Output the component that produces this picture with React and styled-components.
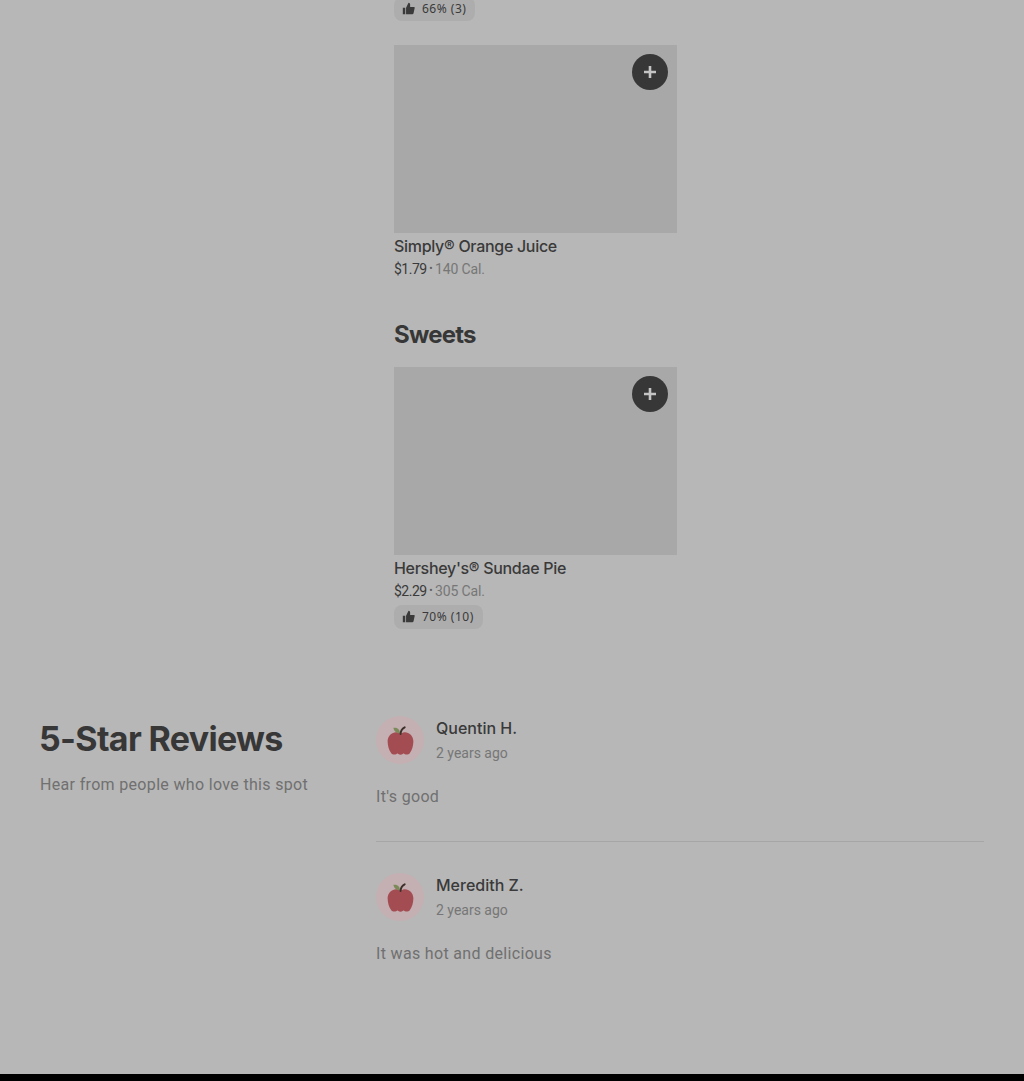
import React from 'react';
import styled, {createGlobalStyle} from 'styled-components';

const GlobalStyle = createGlobalStyle`
	html,
	body {
		margin: 0;
		padding: 0;
		background: #000;
	}
	body {
		font-family: Inter, 'Liberation Sans', sans-serif;
		color: #373737;
	}
`;

const Page = styled.div`
	height: 1074px;
	overflow: hidden;
	background: #b7b7b7;
`;

const Menu = styled.section`
	margin-top: -3px;
	padding-left: 394px;
	width: 283px;
`;

const Chip = styled.div`
	display: inline-flex;
	align-items: center;
	gap: 7px;
	box-sizing: border-box;
	height: 24px;
	margin-top: ${(p) => p.$top || 0}px;
	padding: 0 9px 2px 8px;
	border-radius: 8px;
	background: #adadad;
	font-family: 'Noto Sans', sans-serif;
	font-size: 12px;
	letter-spacing: 0.5px;
	color: #3a3a3a;
	svg {
		width: 13px;
		height: 13px;
	}
`;

const Card = styled.article`
	display: flex;
	flex-direction: column;
	align-items: flex-start;
	margin-top: ${(p) => p.$top || 0}px;
`;

const Photo = styled.div`
	position: relative;
	width: 283px;
	height: 188px;
	background: #a8a8a8;
`;

const AddButton = styled.button`
	position: absolute;
	top: 9px;
	right: 9px;
	display: flex;
	align-items: center;
	justify-content: center;
	width: 36px;
	height: 36px;
	padding: 0;
	border: 0;
	border-radius: 50%;
	background: #373737;
	color: #c4c4c4;
	svg {
		width: 14px;
		height: 14px;
	}
`;

const ItemName = styled.div`
	margin-top: 3px;
	font-size: 16px;
	font-weight: 500;
	line-height: 20px;
	letter-spacing: -0.3px;
	color: #3a3a3a;
`;

const ItemMeta = styled.div`
	display: flex;
	align-items: center;
	gap: 2.5px;
	margin-top: 3px;
	font-family: Roboto, sans-serif;
	font-size: 14px;
	line-height: 20px;
	color: #3a3a3a;
`;

const Price = styled.span`
	letter-spacing: -0.5px;
`;

const Dot = styled.span`
	font-size: 10px;
	color: #5e5e5e;
`;

const Calories = styled.span`
	letter-spacing: -0.15px;
	color: #767676;
`;

const SectionTitle = styled.h2`
	margin: 40px 0 16px;
	font-size: 24px;
	font-weight: 700;
	line-height: 32px;
	letter-spacing: -0.8px;
	color: #373737;
`;

const Reviews = styled.section`
	display: grid;
	grid-template-columns: 336px 608px;
	margin-top: 87px;
	padding-left: 40px;
`;

const ReviewsTitle = styled.h2`
	margin: 0 0 0 -1px;
	font-size: 34px;
	font-weight: 700;
	line-height: 46px;
	letter-spacing: -0.67px;
	color: #373737;
`;

const ReviewsIntro = styled.p`
	margin: 13px 0 0;
	font-family: Roboto, sans-serif;
	font-size: 16px;
	line-height: 20px;
	letter-spacing: 0.33px;
	color: #707070;
`;

const Review = styled.article`
	padding-bottom: 34px;
	& + & {
		padding-top: 31px;
		border-top: 1px solid #a6a6a6;
	}
`;

const Author = styled.div`
	display: flex;
	align-items: center;
	gap: 12px;
`;

const Avatar = styled.div`
	display: flex;
	align-items: center;
	justify-content: center;
	width: 48px;
	height: 48px;
	border-radius: 50%;
	background: #c4b0b3;
	svg {
		width: 33px;
		height: 33px;
	}
`;

const AuthorName = styled.div`
	font-size: 16px;
	font-weight: 500;
	line-height: 20px;
	color: #3a3a3a;
`;

const ReviewDate = styled.div`
	margin-top: 5px;
	font-family: Roboto, sans-serif;
	font-size: 14px;
	line-height: 20px;
	color: #767676;
`;

const ReviewText = styled.p`
	margin: 23px 0 0;
	font-family: Roboto, sans-serif;
	font-size: 16px;
	line-height: 20px;
	letter-spacing: 0.33px;
	color: #707070;
`;

const ThumbIcon = () => (
	<svg viewBox="0 0 16 16" fill="currentColor">
		<path d="M1 7h3v8H1zM5 7l3-6c1.300 0 2 1 2 2v3h4.500c.8 0 1.300.7 1.100 1.500l-1.400 6.300c-.2.700-.7 1.200-1.400 1.200H5z" />
	</svg>
);

const PlusIcon = () => (
	<svg viewBox="0 0 14 14" fill="currentColor">
		<path d="M5.700 1h2.600v4.700H13v2.600H8.300V13H5.700V8.300H1V5.700h4.700z" />
	</svg>
);

const AppleIcon = () => (
	<svg viewBox="0 0 30 30">
		<path
			d="M15 9c-2-1.500-4.500-1.800-6.800-.9C5.500 9.200 3.200 12 3.300 16c.1 4 1.200 8 3.300 10.500 1.200 1.400 3 1.700 4.400.9 1-.5 1.300-.7 2-.1.500.4 1.300.7 2 .7s1.500-.3 2-.7c.7-.6 1-.4 2 .1 1.400.8 3.200.5 4.400-.9 2.100-2.500 3.200-6.500 3.300-10.500.1-4-2.200-6.800-4.900-7.900-2.300-.9-4.800-.6-6.800.9z"
			fill="#a34d52"
		/>
		<path d="M14.500 8.500C12 8.500 9 7 8.500 3.500c3-.5 6 1 6 5z" fill="#7c8a5a" />
		<path
			d="M15 9c.2-2.800 1.400-4.800 3.800-6"
			fill="none"
			stroke="#3c2f2a"
			strokeWidth="1.800"
			strokeLinecap="round"
		/>
	</svg>
);

const reviews = [
	{name: 'Quentin H.', date: '2 years ago', text: "It's good"},
	{name: 'Meredith Z.', date: '2 years ago', text: 'It was hot and delicious'},
];

function Rating({value, top}) {
	return (
		<Chip $top={top}>
			<ThumbIcon />
			{value}
		</Chip>
	);
}

function MenuItem({name, price, calories, rating, top}) {
	return (
		<Card $top={top}>
			<Photo>
				<AddButton aria-label={`Add ${name}`}>
					<PlusIcon />
				</AddButton>
			</Photo>
			<ItemName>{name}</ItemName>
			<ItemMeta>
				<Price>{price}</Price>
				<Dot>•</Dot>
				<Calories>{calories}</Calories>
			</ItemMeta>
			{rating && <Rating value={rating} top={4} />}
		</Card>
	);
}

export default function App() {
	return (
		<Page>
			<GlobalStyle />
			<Menu>
				<Rating value="66% (3)" />
				<MenuItem
					top={24}
					name="Simply® Orange Juice"
					price="$1.79"
					calories="140 Cal."
				/>
				<SectionTitle>Sweets</SectionTitle>
				<MenuItem
					name="Hershey's® Sundae Pie"
					price="$2.29"
					calories="305 Cal."
					rating="70% (10)"
				/>
			</Menu>
			<Reviews>
				<div>
					<ReviewsTitle>5-Star Reviews</ReviewsTitle>
					<ReviewsIntro>Hear from people who love this spot</ReviewsIntro>
				</div>
				<div>
					{reviews.map((review) => (
						<Review key={review.name}>
							<Author>
								<Avatar>
									<AppleIcon />
								</Avatar>
								<div>
									<AuthorName>{review.name}</AuthorName>
									<ReviewDate>{review.date}</ReviewDate>
								</div>
							</Author>
							<ReviewText>{review.text}</ReviewText>
						</Review>
					))}
				</div>
			</Reviews>
		</Page>
	);
}
